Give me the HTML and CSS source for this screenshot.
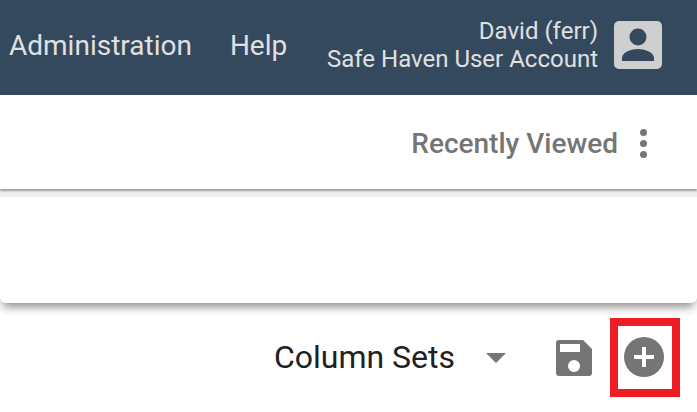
FILE: index.html
```html
<!DOCTYPE html>
<html lang="en">
<head>
    <meta charset="UTF-8">
    <title>Safe Haven</title>
    <link rel="stylesheet" href="styles.css">
</head>
<body>
    <header class="topbar">
        <nav class="nav">
            <a class="nav-link">Administration</a>
            <a class="nav-link">Help</a>
        </nav>
        <div class="user">
            <div class="user-text">
                <div>David (ferr)</div>
                <div>Safe Haven User Account</div>
            </div>
            <div class="avatar">
                <svg width="48" height="48" viewBox="0 0 48 48">
                    <circle cx="24" cy="16" r="8.500" fill="#34495e"/>
                    <path d="M8 40v-3c0-6 10-9 16-9s16 3 16 9v3z" fill="#34495e"/>
                </svg>
            </div>
        </div>
    </header>

    <section class="card recent">
        <span class="recent-label">Recently Viewed</span>
        <span class="dots"><i></i><i></i><i></i></span>
    </section>

    <section class="card empty"></section>

    <section class="toolbar">
        <span class="sets-label">Column Sets</span>
        <span class="caret"></span>
        <svg class="save" width="36" height="36" viewBox="0 0 36 36">
            <path d="M3 0h24l9 9v24a3 3 0 0 1-3 3H3a3 3 0 0 1-3-3V3a3 3 0 0 1 3-3z" fill="#757575"/>
            <rect x="4" y="4" width="20" height="8" fill="#fff"/>
            <circle cx="18" cy="26" r="6" fill="#fff"/>
        </svg>
        <div class="add-box">
            <svg width="40" height="40" viewBox="0 0 40 40">
                <circle cx="20" cy="20" r="20" fill="#757575"/>
                <path d="M18 10h4v8h8v4h-8v8h-4v-8h-8v-4h8z" fill="#fff"/>
            </svg>
        </div>
    </section>
</body>
</html>
```

FILE: styles.css
```css
html, body {
    margin: 0;
    height: 412px;
    overflow: hidden;
}
body {
    font-family: Roboto, "Liberation Sans", sans-serif;
    background: #fff;
}
.topbar {
    height: 90px;
    background: #34495e;
    color: #e0e0e0;
    display: flex;
    justify-content: space-between;
    align-items: center;
    padding: 0 35px 5px 9px;
}
.nav {
    display: flex;
    gap: 38px;
    font-size: 28px;
}
.user {
    display: flex;
    align-items: center;
    gap: 16px;
}
.user-text {
    text-align: right;
    font-size: 24px;
    line-height: 28px;
}
.avatar {
    width: 48px;
    height: 48px;
    background: #cfcfcf;
    border-radius: 5px;
}
.avatar svg {
    display: block;
}
.card {
    background: #fff;
}
.recent {
    height: 92px;
    display: flex;
    justify-content: flex-end;
    align-items: center;
    gap: 22px;
    padding: 2px 50px 0 0;
    box-shadow: 0 2px 2px rgba(0, 0, 0, 0.35), 0 8px 0 #efefef;
}
.recent-label {
    font-size: 28px;
    font-weight: 500;
    color: #757575;
}
.dots {
    display: flex;
    flex-direction: column;
    gap: 4px;
}
.dots i {
    display: block;
    width: 7px;
    height: 7px;
    border-radius: 50%;
    background: #757575;
}
.empty {
    height: 106px;
    margin-top: 8px;
    border-radius: 0 0 6px 6px;
    box-shadow: 0 7px 10px -3px rgba(0, 0, 0, 0.45);
}
.toolbar {
    display: flex;
    align-items: center;
    justify-content: flex-end;
    padding: 15px 17px 0 0;
}
.sets-label {
    font-size: 32px;
    color: #212121;
    margin-bottom: 2px;
}
.caret {
    width: 0;
    height: 0;
    border-left: 10px solid transparent;
    border-right: 10px solid transparent;
    border-top: 10px solid #757575;
    margin-left: 31px;
    margin-right: 50px;
}
.add-box {
    border: 8px solid #ee1c25;
    padding: 11px 8px 12px 6px;
    margin-left: 18px;
}
.add-box svg, .save {
    display: block;
}
```
